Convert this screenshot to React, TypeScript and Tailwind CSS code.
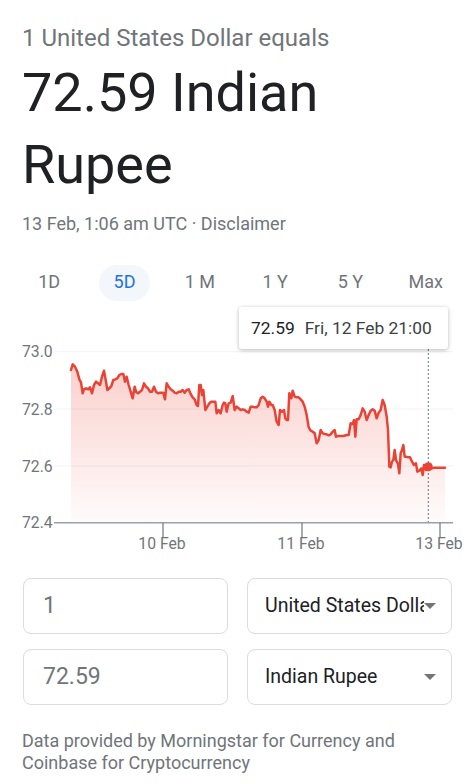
import React from "react";

const RAW: [number, number][] = [
  [213, 90], [218, 73], [225, 80], [232, 95], [238, 118], [243, 127], [248, 160], [252, 148], [258, 145], [265, 148], [270, 142], [276, 160], [282, 135], [288, 125], [294, 130], [300, 135], [306, 110], [312, 92], [318, 125], [322, 150], [328, 145], [334, 138], [340, 120], [346, 118], [352, 115], [358, 105], [364, 102], [370, 102], [375, 125], [380, 110], [386, 135], [392, 155], [398, 175], [404, 140], [408, 155], [414, 160], [420, 155], [426, 150], [432, 130], [438, 140], [444, 145], [450, 155], [456, 155], [462, 140], [468, 155], [474, 160], [480, 158], [486, 158], [490, 158], [495, 178], [500, 130], [506, 140], [512, 148], [518, 152], [524, 158], [530, 160], [536, 155], [542, 155], [548, 150], [554, 158], [560, 150], [566, 148], [572, 162], [578, 172], [584, 178], [590, 195], [594, 198], [598, 135], [602, 135], [606, 165], [610, 150], [616, 210], [622, 200], [628, 190], [634, 185], [640, 185], [646, 185], [650, 220], [656, 210], [662, 220], [668, 195], [672, 188], [676, 190], [680, 215], [686, 190], [692, 188], [698, 168], [704, 210], [710, 200], [716, 205], [722, 210], [728, 208], [734, 210], [740, 215], [746, 218], [752, 200], [758, 200], [764, 202], [770, 202], [776, 195], [782, 175], [788, 170], [794, 175], [800, 185], [804, 200], [808, 185], [814, 195], [818, 195], [824, 210], [830, 245], [836, 255], [840, 210], [846, 215], [852, 210], [856, 235], [860, 240], [864, 240], [868, 160], [874, 175], [878, 152], [884, 170], [890, 172], [896, 172], [902, 178], [908, 185], [914, 200], [920, 225], [926, 262], [932, 272], [938, 275], [944, 280], [950, 310], [956, 300], [962, 270], [968, 280], [974, 282], [980, 283], [986, 286], [992, 283], [998, 275], [1004, 270], [1008, 290], [1014, 288], [1020, 288], [1030, 288], [1040, 285], [1046, 285], [1052, 250], [1058, 252], [1062, 240], [1066, 290], [1070, 238], [1076, 238], [1082, 225], [1088, 205], [1094, 215], [1100, 240], [1106, 225], [1112, 212], [1118, 208], [1124, 212], [1130, 235], [1136, 218], [1142, 210], [1148, 180], [1154, 195], [1160, 230], [1164, 270], [1168, 380], [1172, 382], [1176, 365], [1180, 360], [1184, 330], [1188, 360], [1194, 372], [1198, 400], [1202, 340], [1206, 330], [1210, 315], [1214, 350], [1218, 350], [1224, 352], [1230, 352], [1236, 365], [1242, 375], [1248, 370], [1252, 395], [1258, 392], [1264, 385], [1268, 405], [1272, 375], [1278, 390], [1284, 382], [1290, 385], [1296, 385], [1302, 383], [1310, 383], [1320, 383], [1335, 383],
];

const PTS = RAW.map(([x, y]) => [x / 3, 340 + y / 3] as [number, number]);
const LINE = PTS.map((p, i) => `${i ? "L" : "M"}${p[0].toFixed(2)} ${p[1].toFixed(2)}`).join(" ");
const AXIS_Y = 522.7;
const AREA = `${LINE} L${PTS[PTS.length - 1][0].toFixed(2)} ${AXIS_Y} L${PTS[0][0].toFixed(2)} ${AXIS_Y} Z`;

const GRID = [
  { y: 351.7, label: "73.0" },
  { y: 409, label: "72.8" },
  { y: 466, label: "72.6" },
  { y: AXIS_Y, label: "72.4" },
];

const XT = [
  { x: 163, label: "10 Feb" },
  { x: 302, label: "11 Feb" },
  { x: 440, label: "13 Feb" },
];

const TABS = ["1D", "5D", "1 M", "1 Y", "5 Y", "Max"];

function Chart() {
  return (
    <div className="relative h-[259px] w-[475px]">
      <svg className="block" width="475" height="259" viewBox="0 301 475 259">
        <defs>
          <linearGradient id="fillg" x1="0" y1="350" x2="0" y2="522" gradientUnits="userSpaceOnUse">
            <stop offset="0" stopColor="#ea4335" stopOpacity="0.27" />
            <stop offset="1" stopColor="#ea4335" stopOpacity="0.02" />
          </linearGradient>
        </defs>
        {GRID.slice(0, 3).map((g) => (
          <line key={g.label} x1="54" x2="453" y1={g.y} y2={g.y} stroke="#f1f3f4" strokeWidth="1" />
        ))}
        {GRID.map((g) => (
          <text key={"t" + g.label} x="22" y={g.y + 5.6} fontSize="15.75" fill="#70757a" fontFamily="Roboto, sans-serif">
            {g.label}
          </text>
        ))}
        <path d={AREA} fill="url(#fillg)" />
        <line x1="428.3" x2="428.3" y1="349" y2={AXIS_Y} stroke="#70757a" strokeWidth="1" strokeDasharray="2 2" />
        <path d={LINE} fill="none" stroke="#ea4335" strokeWidth="2.5" strokeLinejoin="round" strokeLinecap="round" />
        <circle cx="428.3" cy="466.8" r="4.5" fill="#ea4335" />
        <line x1="54" x2="453" y1={AXIS_Y} y2={AXIS_Y} stroke="#9aa0a6" strokeWidth="1.5" />
        {XT.map((t) => (
          <g key={t.label}>
            <text x={t.x - 1} y="548.5" textAnchor="middle" fontSize="15.75" fill="#70757a" fontFamily="Roboto, sans-serif">
              {t.label}
            </text>
            <line x1={t.x} x2={t.x} y1={AXIS_Y} y2="537" stroke="#70757a" strokeWidth="1.2" />
          </g>
        ))}
      </svg>
      <div className="absolute left-[239px] top-[5.7px] flex h-[42.5px] w-[209px] items-center rounded-[3px] bg-white pl-[12px] text-[17.4px] shadow-[0_1px_4px_rgba(0,0,0,0.28)]">
        <span className="text-[#202124]">72.59</span>
        <span className="ml-[10px] text-[#3c4043]">Fri, 12 Feb 21:00</span>
      </div>
    </div>
  );
}

function NumBox({ v }: { v: string }) {
  return (
    <div className="flex h-[56px] items-center rounded-[8px] border border-[#dadce0] pl-[19px] text-[23px] text-[#70757a]">
      {v}
    </div>
  );
}

function SelBox({ v }: { v: string }) {
  return (
    <div className="relative flex h-[56px] items-center rounded-[8px] border border-[#dadce0] pl-[17px] pr-[27px] text-[19.5px] text-[#202124]">
      <span className="overflow-hidden whitespace-nowrap">{v}</span>
      <span className="absolute right-[15px] top-1/2 h-0 w-0 -translate-y-1/2 border-l-[6px] border-r-[6px] border-t-[6px] border-l-transparent border-r-transparent border-t-[#757575]" />
    </div>
  );
}

export default function App() {
  return (
    <div className="w-[475px] bg-white font-['Roboto',sans-serif]">
      <div className="pl-[22px] pt-[22px]">
        <p className="text-[24px] leading-[32px] text-[#70757a]">1 United States Dollar equals</p>
        <div className="mt-[2.5px] text-[54px] leading-[72px] text-[#202124]">
          72.59 Indian
          <br />
          Rupee
        </div>
        <p className="mt-[11.5px] text-[18px] leading-[24px] text-[#70757a]">13 Feb, 1:06 am UTC · Disclaimer</p>
      </div>
      <div className="mt-[29px] grid h-[36px] grid-cols-6 px-[11.5px]">
        {TABS.map((t) => (
          <div key={t} className="flex items-center justify-center">
            {t === "5D" ? (
              <span className="flex h-[36px] w-[51px] items-center justify-center rounded-full bg-[#f3f6fb] pb-[3px] text-[18px] text-[#1a73e8]">
                {t}
              </span>
            ) : (
              <span className="pb-[3px] text-[18px] text-[#70757a]">{t}</span>
            )}
          </div>
        ))}
      </div>
      <Chart />
      <div className="mt-[18px] grid grid-cols-2 gap-x-[19px] gap-y-[15px] px-[23px]">
        <NumBox v="1" />
        <SelBox v="United States Dollar" />
        <NumBox v="72.59" />
        <SelBox v="Indian Rupee" />
      </div>
      <p className="mt-[25px] pb-[14px] pl-[22px] text-[18px] leading-[21.5px] text-[#70757a]">
        Data provided by Morningstar for Currency and
        <br />
        Coinbase for Cryptocurrency
      </p>
    </div>
  );
}
